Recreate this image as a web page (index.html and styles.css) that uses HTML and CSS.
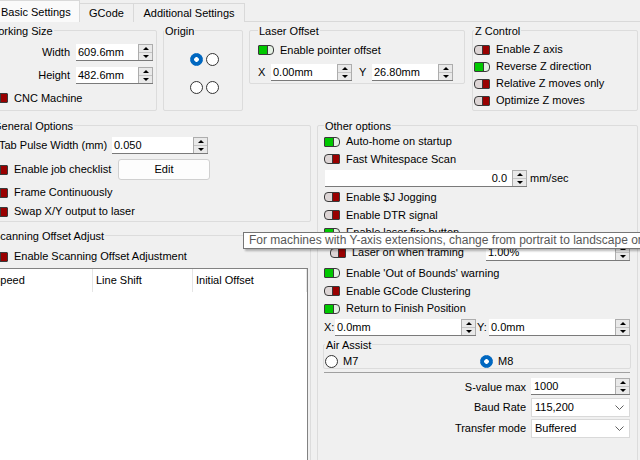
FILE: index.html
```html
<!DOCTYPE html>
<html lang="en">
<head>
<meta charset="utf-8">
<title>Device Settings</title>
<link rel="stylesheet" href="styles.css">
</head>
<body>
<div class="tabs">
  <div class="tab sel">Basic Settings</div>
  <div class="tab t-gcode">GCode</div>
  <div class="tab t-add">Additional Settings</div>
</div>
<div class="pane">
  <div class="toprow">
    <section class="grp g-ws">
      <div class="gt">Working Size</div>
      <div class="ws-form">
        <span class="lbl-r">Width</span>
        <div class="spin"><span class="sv">609.6mm</span><span class="sb"><i class="up"></i><i class="dn"></i></span></div>
        <span class="lbl-r">Height</span>
        <div class="spin"><span class="sv">482.6mm</span><span class="sb"><i class="up"></i><i class="dn"></i></span></div>
      </div>
      <div class="chk ws-cnc"><span class="tg off"></span>CNC Machine</div>
    </section>
    <section class="grp g-or">
      <div class="gt">Origin</div>
      <div class="origin">
        <span class="rb on"></span><span class="rb"></span>
        <span class="rb"></span><span class="rb"></span>
      </div>
    </section>
    <section class="grp g-lo">
      <div class="gt">Laser Offset</div>
      <div class="chk lo-ptr"><span class="tg on"></span>Enable pointer offset</div>
      <div class="lo-xy">
        <span class="xy-l">X</span>
        <div class="spin w81"><span class="sv">0.00mm</span><span class="sb"><i class="up"></i><i class="dn"></i></span></div>
        <span class="xy-l y">Y</span>
        <div class="spin w81"><span class="sv">26.80mm</span><span class="sb"><i class="up"></i><i class="dn"></i></span></div>
      </div>
    </section>
    <section class="grp g-z">
      <div class="gt">Z Control</div>
      <div class="zlist">
        <div class="chk z"><span class="tg off"></span>Enable Z axis</div>
        <div class="chk z"><span class="tg on"></span>Reverse Z direction</div>
        <div class="chk z"><span class="tg off"></span>Relative Z moves only</div>
        <div class="chk z"><span class="tg off"></span>Optimize Z moves</div>
      </div>
    </section>
  </div>

  <div class="lower">
    <div class="lcol">
      <section class="grp g-go">
        <div class="gt">General Options</div>
        <div class="go-tab">
          <span class="go-l">Tab Pulse Width (mm)</span>
          <div class="spin w96"><span class="sv">0.050</span><span class="sb"><i class="up"></i><i class="dn"></i></span></div>
        </div>
        <div class="go-job">
          <div class="chk job"><span class="tg off"></span>Enable job checklist</div>
          <button class="btn" type="button">Edit</button>
        </div>
        <div class="chk go-frame"><span class="tg off"></span>Frame Continuously</div>
        <div class="chk go-swap"><span class="tg off"></span>Swap X/Y output to laser</div>
      </section>
      <section class="grp g-so">
        <div class="gt">Scanning Offset Adjust</div>
        <div class="chk so-en"><span class="tg off"></span>Enable Scanning Offset Adjustment</div>
        <div class="table">
          <div class="thead">
            <span class="th c1">Speed</span>
            <span class="th c2">Line Shift</span>
            <span class="th c3">Initial Offset</span>
          </div>
        </div>
      </section>
    </div>

    <section class="grp g-oo">
      <div class="gt">Other options</div>
      <div class="chk h17"><span class="tg on"></span>Auto-home on startup</div>
      <div class="chk h18"><span class="tg off"></span>Fast Whitespace Scan</div>
      <div class="oo-speed">
        <div class="spin w202"><span class="sv r">0.0</span><span class="sb"><i class="up"></i><i class="dn"></i></span></div>
        <span class="unit">mm/sec</span>
      </div>
      <div class="chk h18"><span class="tg off"></span>Enable $J Jogging</div>
      <div class="chk h18"><span class="tg off"></span>Enable DTR signal</div>
      <div class="chk h17"><span class="tg on"></span>Enable laser fire button</div>
      <div class="oo-frame">
        <div class="chk ind"><span class="tg off"></span>Laser on when framing</div>
        <div class="spin w144"><span class="sv">1.00%</span><span class="sb"><i class="up"></i><i class="dn"></i></span></div>
      </div>
      <div class="chk h18"><span class="tg on"></span>Enable 'Out of Bounds' warning</div>
      <div class="chk h18"><span class="tg off"></span>Enable GCode Clustering</div>
      <div class="chk h17"><span class="tg on"></span>Return to Finish Position</div>
      <div class="oo-xy">
        <span class="xl">X:</span>
        <div class="spin grow"><span class="sv">0.0mm</span><span class="sb"><i class="up"></i><i class="dn"></i></span></div>
        <span class="yl">Y:</span>
        <div class="spin grow"><span class="sv">0.0mm</span><span class="sb"><i class="up"></i><i class="dn"></i></span></div>
      </div>
      <section class="grp air">
        <div class="gt">Air Assist</div>
        <div class="air-row">
          <span class="rad"><span class="rb"></span>M7</span>
          <span class="rad"><span class="rb on"></span>M8</span>
        </div>
      </section>
      <div class="sep"></div>
      <div class="oo-form">
        <span class="fl">S-value max</span>
        <div class="spin fs"><span class="sv p3">1000</span><span class="sb"><i class="up"></i><i class="dn"></i></span></div>
        <span class="fl">Baud Rate</span>
        <div class="combo"><span>115,200</span><svg class="chev" width="9" height="5" viewBox="0 0 9 5"><polyline points="0.5,0.5 4.5,4.5 8.5,0.5" fill="none" stroke="#606060" stroke-width="1"/></svg></div>
        <span class="fl">Transfer mode</span>
        <div class="combo"><span>Buffered</span><svg class="chev" width="9" height="5" viewBox="0 0 9 5"><polyline points="0.5,0.5 4.5,4.5 8.5,0.5" fill="none" stroke="#606060" stroke-width="1"/></svg></div>
      </div>
    </section>
  </div>
</div>

<div class="tip">For machines with Y-axis extensions, change from portrait to landscape orientation</div>
</body>
</html>
```

FILE: styles.css
```css
html, body {
  margin: 0;
  padding: 0;
}
body {
  width: 640px;
  height: 460px;
  overflow: hidden;
  position: relative;
  background: #f0f0f0;
  color: #000;
  font-family: "Liberation Sans", Arial, sans-serif;
  font-size: 11px;
  line-height: 13px;
}

/* ---------- tabs ---------- */
.tabs {
  display: flex;
  align-items: flex-end;
  height: 22px;
  margin-left: -8px;
  box-shadow: inset 0 -1px #d9d9d9;
}
.tab {
  box-sizing: border-box;
  height: 19px;
  border: 1px solid #d9d9d9;
  border-bottom: 0;
  padding-top: 3px;
  text-align: center;
  white-space: nowrap;
  background: #f0f0f0;
  margin-right: -1px;
}
.tab.sel {
  height: 22px;
  width: 88px;
  padding-top: 5px;
  padding-left: 8px;
  text-align: left;
  background: #fafafa;
}
.t-gcode { width: 55px; }
.t-add { width: 112px; }

/* ---------- group boxes ---------- */
.grp {
  box-sizing: border-box;
  border: 1px solid #dcdcdc;
  border-radius: 2px;
}
.gt {
  display: table;
  margin-top: -6px;
  padding: 0 1px;
  background: #f0f0f0;
  white-space: nowrap;
}

.toprow {
  display: flex;
  align-items: flex-start;
  margin: 8px 0 0 -14px;
}
.g-ws { width: 171px; height: 81px; }
.g-or { width: 80px; height: 81px; margin-left: 6px; }
.g-lo { width: 216px; height: 54px; margin-left: 6px; padding-left: 8px; }
.g-z  { width: 166px; height: 81px; margin-left: 7px; padding-left: 1px; }

.ws-form {
  display: grid;
  grid-template-columns: 83px 77px;
  grid-auto-rows: 17px;
  column-gap: 6px;
  row-gap: 6px;
  margin-top: 6px;
}
.lbl-r { text-align: right; line-height: 17px; }
.ws-cnc { margin-top: 6px; height: 16px; padding-left: 5px; }

.origin {
  display: grid;
  grid-template-columns: 13px 13px;
  grid-auto-rows: 13px;
  column-gap: 3px;
  row-gap: 15px;
  justify-content: center;
  padding-left: 2px;
  margin-top: 15px;
}

.lo-ptr { margin-top: 4px; height: 16px; }
.lo-xy { display: flex; align-items: center; margin-top: 6px; height: 17px; }
.xy-l { width: 13px; flex: none; }
.xy-l.y { margin-left: 7px; }
.w81 { width: 81px; }

.zlist { margin-top: 3px; }
.chk.z { height: 17px; }

/* ---------- widgets ---------- */
.chk {
  display: flex;
  align-items: center;
  white-space: nowrap;
}
.tg {
  flex: none;
  width: 16px;
  height: 10px;
  box-sizing: border-box;
  border: 1px solid #3a3a3a;
  margin-right: 6px;
}
.tg.off {
  border-radius: 4px 1px 1px 4px;
  background: linear-gradient(90deg, #ddd5d5 0 7px, #3a3a3a 7px 8px, #990000 8px);
}
.tg.on {
  border-radius: 1px 4px 4px 1px;
  background: linear-gradient(90deg, #00c800 0 8px, #3a3a3a 8px 9px, #e4f1e4 9px);
}

.rb {
  flex: none;
  width: 13px;
  height: 13px;
  box-sizing: border-box;
  border: 1px solid #333;
  border-radius: 50%;
  background: #fff;
}
.rb.on {
  border-color: #0067c0;
  background: radial-gradient(circle, #fff 0 2px, #0067c0 2.6px);
}

.spin {
  display: flex;
  height: 17px;
  box-sizing: border-box;
  background: #fff;
  border-bottom: 1px solid #7a7a7a;
}
.sv {
  flex: 1;
  min-width: 0;
  padding-left: 2px;
  line-height: 16px;
  white-space: nowrap;
  overflow: hidden;
}
.sv.r { text-align: right; padding-right: 5px; }
.sv.p3 { padding-left: 3px; }
.sb {
  flex: none;
  width: 15px;
  box-sizing: border-box;
  display: flex;
  flex-direction: column;
  border: 1px solid #adadad;
  border-bottom: 0;
  background: #e9e9e9;
}
.sb i {
  flex: 1;
  display: flex;
  align-items: center;
  justify-content: center;
}
.sb i::before {
  content: "";
  border-left: 3px solid transparent;
  border-right: 3px solid transparent;
}
.sb .up { border-bottom: 1px solid #c4c4c4; }
.sb .up::before { border-bottom: 3px solid #000; }
.sb .dn::before { border-top: 3px solid #000; }

.btn {
  width: 92px;
  height: 21px;
  box-sizing: border-box;
  padding: 0;
  border: 1px solid #d0d0d0;
  border-radius: 3px;
  background: #fdfdfd;
  font: inherit;
  color: #000;
}

.combo {
  height: 19px;
  box-sizing: border-box;
  display: flex;
  align-items: center;
  justify-content: space-between;
  background: #fff;
  border: 1px solid #d9d9d9;
  padding: 0 5px 0 3px;
}

/* ---------- lower area ---------- */
.lower {
  display: flex;
  align-items: flex-start;
  margin: 14px 0 0 -11px;
}
.lcol {
  width: 322px;
  flex: none;
  display: flex;
  flex-direction: column;
}
.g-go { height: 97px; padding-left: 2px; }
.go-tab { display: flex; align-items: center; margin-top: 4px; height: 17px; }
.go-l { width: 113px; padding-left: 7px; flex: none; white-space: nowrap; }
.w96 { width: 96px; }
.go-job { display: flex; align-items: center; margin-top: 5px; height: 21px; }
.chk.job { width: 126px; }
.go-frame { margin-top: 4px; height: 17px; }
.go-swap { margin-top: 2px; height: 17px; }

.g-so { margin-top: 13px; height: 240px; padding-left: 2px; }
.so-en { margin-top: 5px; height: 17px; }
.table {
  margin: 3px 0 0 -3px;
  width: 319px;
  height: 200px;
  box-sizing: border-box;
  background: #fff;
  border: 1px solid #828282;
}
.thead { display: flex; height: 23px; }
.th {
  box-sizing: border-box;
  border-right: 1px solid #e5e5e5;
  padding-left: 3px;
  line-height: 23px;
  white-space: nowrap;
}
.th.c1 { width: 103px; }
.th.c2 { width: 100px; }
.th.c3 { width: 114px; }

.g-oo {
  width: 321px;
  height: 345px;
  margin-left: 6px;
  padding: 0 7px 0 6px;
}
.h17 { height: 17px; }
.h18 { height: 18px; }
.oo-speed { display: flex; align-items: center; height: 20px; }
.w202 { width: 202px; margin-left: 1px; }
.unit { margin-left: 3px; }
.oo-frame { display: flex; align-items: center; justify-content: space-between; height: 23px; }
.chk.ind { padding-left: 6px; }
.w144 { width: 144px; }
.oo-xy { display: flex; align-items: center; height: 21px; }
.xl { width: 11px; flex: none; }
.yl { width: 12px; flex: none; margin-left: 1px; }
.grow { flex: 1; }

.air { margin: 6px 0 0 -1px; width: 308px; height: 25px; padding-left: 1px; }
.air-row {
  display: grid;
  grid-template-columns: 155px 1fr;
  margin-top: 2px;
  height: 14px;
}
.rad { display: flex; align-items: center; }
.rad .rb { margin-right: 5px; }

.sep { margin-top: 3px; border-top: 1px solid #a0a0a0; }

.oo-form {
  display: grid;
  grid-template-columns: 1fr 99px;
  grid-template-rows: 18px 19px 19px;
  column-gap: 5px;
  row-gap: 2px;
  margin-top: 5px;
}
.fl { text-align: right; align-self: center; white-space: nowrap; }
.fs { align-self: start; }

/* ---------- tooltip ---------- */
.tip {
  position: absolute;
  left: 243px;
  top: 232px;
  width: 430px;
  height: 17px;
  box-sizing: border-box;
  padding-left: 5px;
  background: #fff;
  border: 1px solid #767676;
  color: #575757;
  font-size: 12px;
  line-height: 15px;
  white-space: nowrap;
  overflow: hidden;
  box-shadow: 2px 2px 2px rgba(0, 0, 0, 0.28);
}
```
